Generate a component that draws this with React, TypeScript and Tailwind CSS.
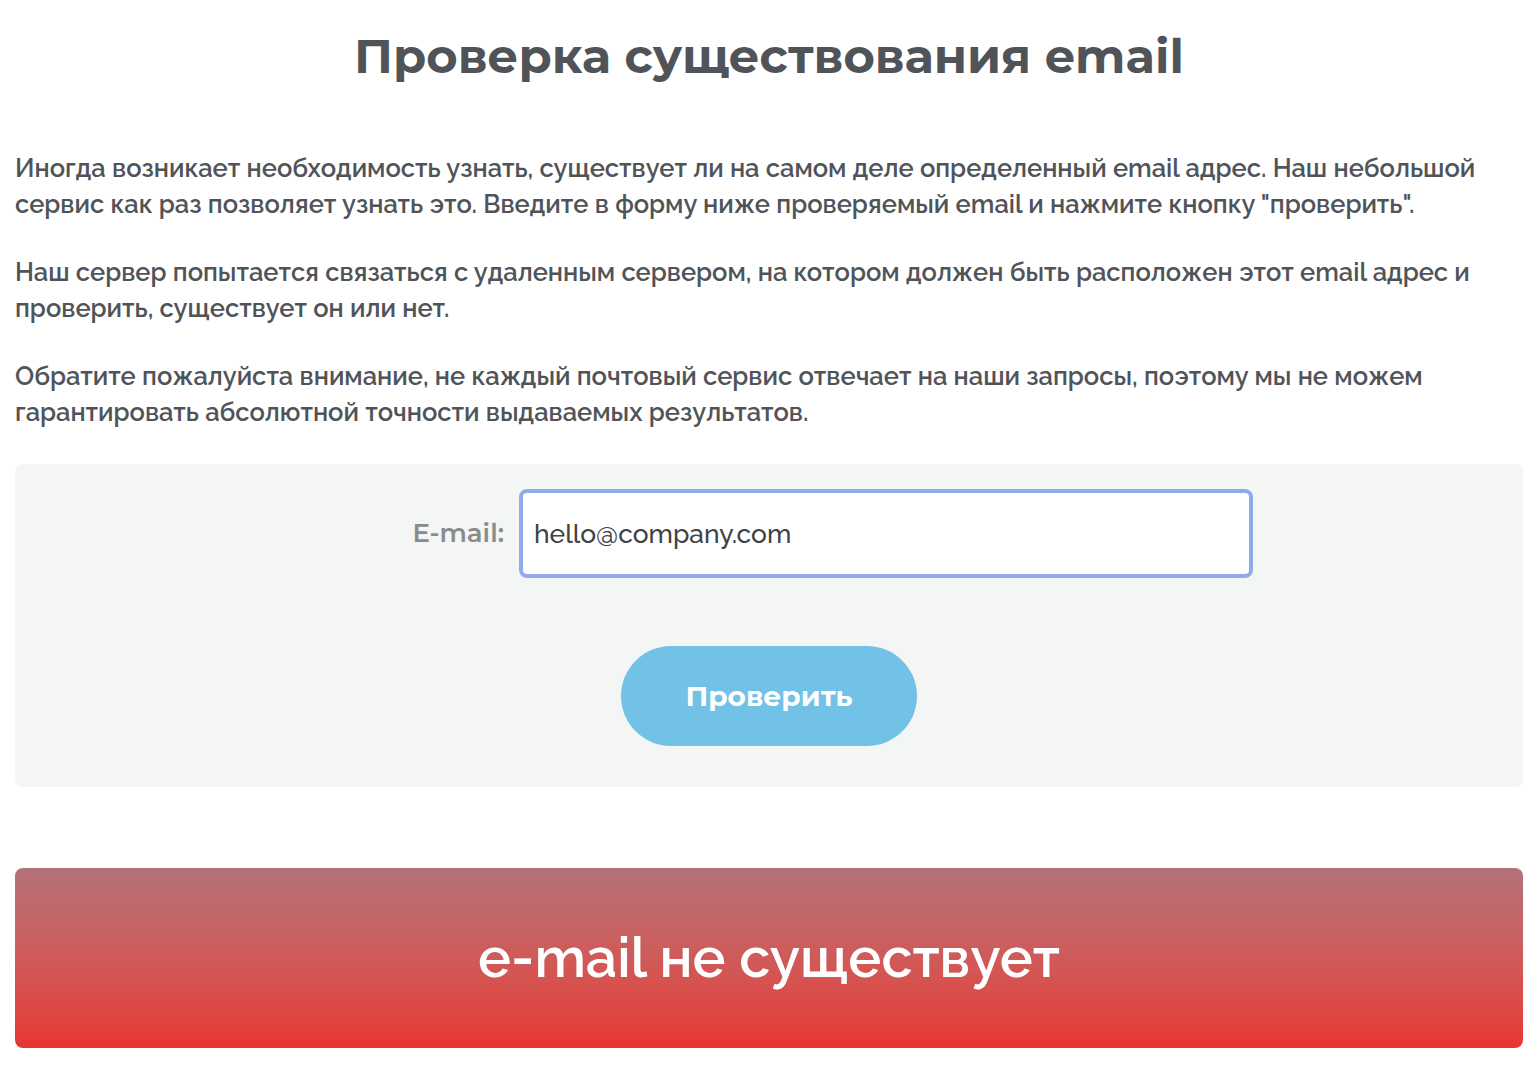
import { useState } from 'react'

const body = "font-['Raleway','Open_Sans',sans-serif]"
const head = "font-['Montserrat','Noto_Sans',sans-serif]"

export default function App() {
  const [email, setEmail] = useState('hello@company.com')

  return (
    <div className={`min-h-screen bg-white px-[15px] pt-[26px] pb-6 text-[#505459] ${body}`}>
      <h1 className={`text-center ${head} text-[48px] font-bold leading-[60px] text-[#505459]`}>
        Проверка существования email
      </h1>

      <div className="mt-[64px] space-y-[32px] text-[25.5px] font-semibold leading-[36px]">
        <p>
          Иногда возникает необходимость узнать, существует ли на самом деле определенный email адрес. Наш небольшой
          сервис как раз позволяет узнать это. Введите в форму ниже проверяемый email и нажмите кнопку "проверить".
        </p>
        <p>
          Наш сервер попытается связаться с удаленным сервером, на котором должен быть расположен этот email адрес и
          проверить, существует он или нет.
        </p>
        <p>
          Обратите пожалуйста внимание, не каждый почтовый сервис отвечает на наши запросы, поэтому мы не можем
          гарантировать абсолютной точности выдаваемых результатов.
        </p>
      </div>

      <form
        className="mt-[34px] flex flex-col items-center rounded-lg bg-[#f4f5f5] pt-[25px] pb-[41px]"
        onSubmit={(e) => e.preventDefault()}
      >
        <div className="flex w-full items-center">
          <label className={`w-[504px] pr-[15px] text-right ${head} text-[26px] font-semibold text-[#8a8c8c]`}>
            E-mail:
          </label>
          <input
            value={email}
            onChange={(e) => setEmail(e.target.value)}
            className="h-[89px] w-[734px] rounded-lg border-[4px] border-[#8fabec] bg-white px-[11px] text-[26.4px] font-medium text-[#3f4246] outline-none"
          />
        </div>
        <button
          type="submit"
          className={`mt-[68px] h-[100px] w-[296px] rounded-full bg-[#72c1e6] ${head} text-[28px] font-bold text-white`}
        >
          Проверить
        </button>
      </form>

      <div className="mt-[81px] flex h-[180px] items-center justify-center rounded-lg bg-gradient-to-b from-[#b37179] to-[#e8342f]">
        <span className="text-[55.5px] font-semibold text-white">e-mail не существует</span>
      </div>
    </div>
  )
}
